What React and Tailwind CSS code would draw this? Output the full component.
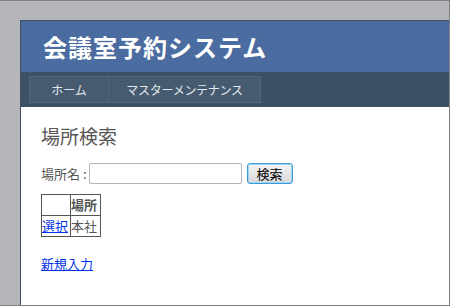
import React, { useState } from "react";

const font = { fontFamily: '"Noto Sans CJK JP", "Noto Sans", sans-serif' };

function NavItem({ label, first }) {
  return (
    <a
      href="#"
      className={
        "flex h-[27px] items-center justify-center border border-[#52667d] bg-[#475b70] text-[12px] text-[#e3e8ee] " +
        (first ? "w-[80px]" : "w-[153px] -ml-px tracking-[-0.3px]")
      }
    >
      {label}
    </a>
  );
}

export default function App() {
  const [name, setName] = useState("");

  return (
    <div
      className="flex h-[306px] w-[450px] flex-col border-t border-r border-b border-[#7f7f7f] bg-[#b5b6ba] pt-[19px] pl-5"
      style={font}
    >
      <div className="flex flex-1 flex-col border-l border-t border-[#3f5068] bg-white">
        <header className="flex h-[51px] items-center bg-[#4a6ca0] pl-[22px]">
          <h1 className="text-[24px] font-bold leading-none tracking-[1px] text-white">
            会議室予約システム
          </h1>
        </header>
        <nav className="flex h-[35px] items-start bg-[#3d5066] pt-1 pl-2">
          <NavItem label="ホーム" first />
          <NavItem label="マスターメンテナンス" />
        </nav>
        <main className="flex flex-col pl-5 pt-[17px] text-[13px] text-[#555]">
          <h2 className="text-[19px] leading-[24px] text-[#555]">場所検索</h2>
          <div className="mt-[15px] flex items-center">
            <label className="mr-[2px]">場所名 :</label>
            <input
              value={name}
              onChange={(e) => setName(e.target.value)}
              className="h-[21px] w-[153px] rounded-[2px] border border-[#b0b4bc] px-1 text-[13px] outline-none"
            />
            <button className="ml-[5px] h-[21px] w-[46px] rounded-[3px] border border-[#3a9ad6] bg-gradient-to-b from-[#f4f4f4] to-[#d8d8d8] text-[13px] leading-none text-black shadow-[inset_0_0_0_1px_#9fd6f3]">
              検索
            </button>
          </div>
          <table className="mt-[10px] w-[60px] border-collapse border border-[#444] text-[13px]">
            <thead>
              <tr className="h-[20px]">
                <th className="w-[29px] border border-[#555]"></th>
                <th className="border border-[#555] px-0 text-left font-bold">場所</th>
              </tr>
            </thead>
            <tbody>
              <tr className="h-[21px]">
                <td className="border border-[#555]">
                  <a href="#" className="text-[#0033ee] underline">
                    選択
                  </a>
                </td>
                <td className="border border-[#555]">本社</td>
              </tr>
            </tbody>
          </table>
          <a href="#" className="mt-[17px] self-start text-[13px] text-[#0033ee] underline">
            新規入力
          </a>
        </main>
      </div>
    </div>
  );
}
